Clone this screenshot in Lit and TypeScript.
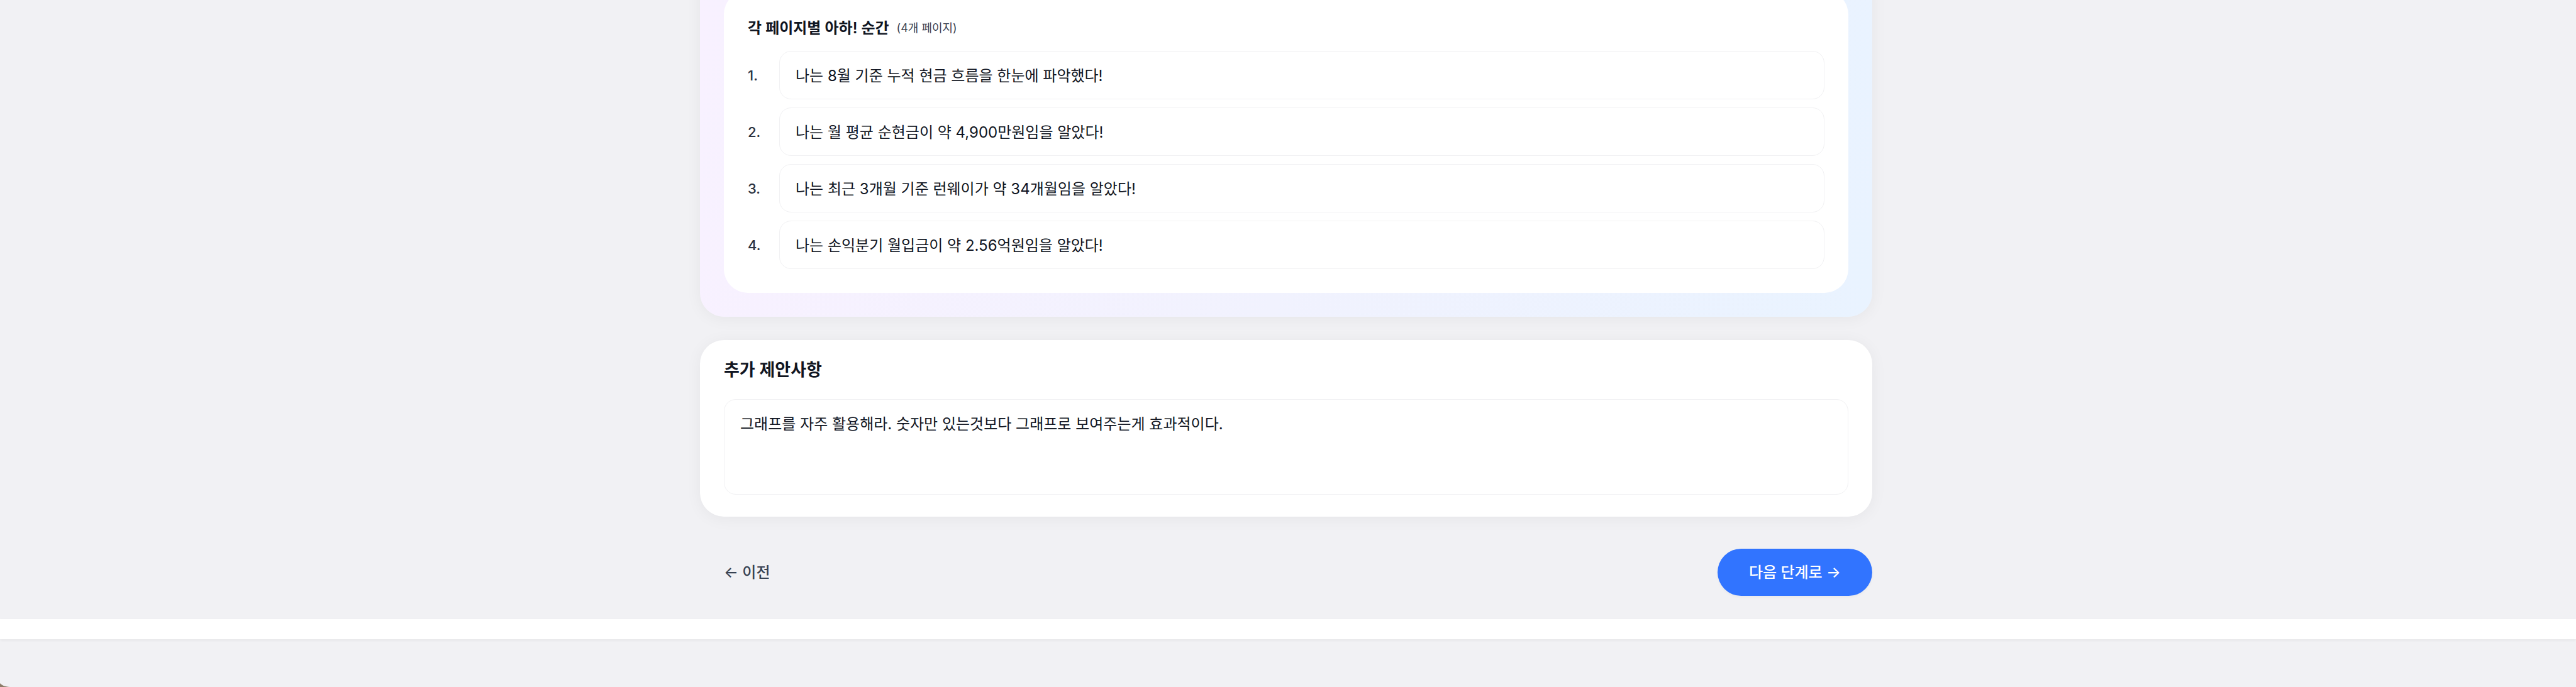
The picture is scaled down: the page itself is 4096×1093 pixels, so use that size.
import { LitElement, html, css } from "lit";
import { customElement, state } from "lit/decorators.js";

@customElement("app-root")
export class AppRoot extends LitElement {
  @state() private moments: string[] = [
    "나는 8월 기준 누적 현금 흐름을 한눈에 파악했다!",
    "나는 월 평균 순현금이 약 4,900만원임을 알았다!",
    "나는 최근 3개월 기준 런웨이가 약 34개월임을 알았다!",
    "나는 손익분기 월입금이 약 2.56억원임을 알았다!",
  ];

  @state() private suggestion =
    "그래프를 자주 활용해라. 숫자만 있는것보다 그래프로 보여주는게 효과적이다.";

  static styles = css`
    :host {
      display: block;
      position: relative;
      min-height: 100vh;
      overflow: hidden;
      background: #f1f1f4;
      color: #101522;
      font-family: Inter, "Noto Sans CJK KR", sans-serif;
      font-size: 24px;
      line-height: 40px;
    }
    * {
      box-sizing: border-box;
    }
    .content {
      display: flex;
      flex-direction: column;
      gap: 37px;
      width: 100%;
      padding: 0 6px 37px 0;
    }
    .card,
    .actions {
      width: 100%;
      max-width: 1864px;
      margin: 0 auto;
    }
    .card {
      border-radius: 38px;
      box-shadow: 0 3px 26px rgba(0, 0, 0, 0.05);
    }
    .summary {
      margin-top: -53px;
      padding: 38px;
      background: linear-gradient(95deg, #f8f1ff, #f1f2fe 50%, #e9f3ff);
    }
    .panel {
      padding: 38px;
      border-radius: 38px;
      background: #fff;
    }
    .panel-head {
      display: flex;
      align-items: center;
      gap: 12px;
      padding-top: 2px;
      margin-bottom: 16px;
    }
    h2,
    h3 {
      margin: 0;
      font-weight: 600;
      line-height: 40px;
    }
    h3 {
      font-size: 24px;
    }
    h2 {
      font-size: 27px;
    }
    .count {
      font-size: 18px;
      color: #374151;
    }
    .moments {
      display: flex;
      flex-direction: column;
      gap: 13px;
      margin: 0;
      padding: 0;
      list-style: none;
    }
    .moment {
      display: grid;
      grid-template-columns: 31px 1fr;
      align-items: center;
      gap: 19px;
    }
    .number {
      font-size: 22px;
      font-weight: 500;
      color: #2b3240;
    }
    .field {
      display: block;
      width: 100%;
      margin: 0;
      border: 1px solid #f1f1f3;
      border-radius: 19px;
      background: #fff;
      color: inherit;
      font: inherit;
      outline: none;
    }
    .field:focus {
      border-color: #3174ff;
    }
    input.field {
      height: 77px;
      padding: 0 25px 2px;
    }
    textarea.field {
      height: 152px;
      padding: 19px 25px;
      resize: none;
    }
    .suggestion {
      padding: 28px 38px 35px;
      background: #fff;
    }
    .suggestion h2 {
      margin-bottom: 26px;
    }
    .actions {
      display: flex;
      align-items: center;
      justify-content: space-between;
      padding: 14px 0 0 38px;
    }
    button {
      border: 0;
      font: inherit;
      font-weight: 500;
      cursor: pointer;
    }
    .prev {
      padding: 0;
      background: none;
      color: #374151;
    }
    .next {
      height: 75px;
      padding: 0 50px;
      border-radius: 38px;
      background: #3174ff;
      color: #fff;
      box-shadow: 0 2px 4px rgba(0, 0, 0, 0.04);
    }
    .strip {
      height: 32px;
      background: #fff;
      box-shadow: 0 2px 4px rgba(0, 0, 0, 0.05);
    }
    .corner {
      position: absolute;
      left: 0;
      bottom: 0;
      width: 16px;
      height: 6px;
    }
  `;

  private editMoment(index: number, value: string) {
    this.moments = this.moments.map((m, i) => (i === index ? value : m));
  }

  render() {
    return html`
      <main class="content">
        <section class="card summary">
          <div class="panel">
            <div class="panel-head">
              <h3>각 페이지별 아하! 순간</h3>
              <span class="count">(${this.moments.length}개 페이지)</span>
            </div>
            <ol class="moments">
              ${this.moments.map(
                (text, i) => html`
                  <li class="moment">
                    <label class="number" for="moment-${i}">${i + 1}.</label>
                    <input
                      class="field"
                      id="moment-${i}"
                      type="text"
                      .value=${text}
                      @input=${(e: Event) =>
                        this.editMoment(i, (e.target as HTMLInputElement).value)}
                    />
                  </li>
                `,
              )}
            </ol>
          </div>
        </section>
        <section class="card suggestion">
          <h2><label for="suggestion">추가 제안사항</label></h2>
          <textarea
            class="field"
            id="suggestion"
            .value=${this.suggestion}
            @input=${(e: Event) =>
              (this.suggestion = (e.target as HTMLTextAreaElement).value)}
          ></textarea>
        </section>
        <nav class="actions">
          <button class="prev" type="button">← 이전</button>
          <button class="next" type="button">다음 단계로 →</button>
        </nav>
      </main>
      <div class="strip"></div>
      <svg class="corner" viewBox="0 0 16 6" aria-hidden="true">
        <path d="M0 0C3 3.500 8 5.500 16 6H0Z" fill="#8d7c68" />
      </svg>
    `;
  }
}
